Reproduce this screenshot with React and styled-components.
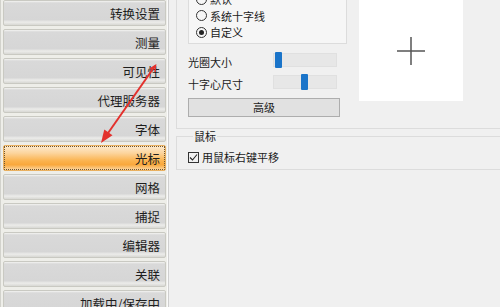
import React from 'react';
import styled, { createGlobalStyle } from 'styled-components';

const GlobalStyle = createGlobalStyle`
  html, body {
    margin: 0;
    padding: 0;
    background: #f0f0f0;
  }
  body {
    font-family: "Noto Sans CJK SC", "Noto Sans", sans-serif;
  }
`;

const Window = styled.div`
  position: relative;
  width: 500px;
  height: 307px;
  overflow: hidden;
  display: flex;
  background: #f0f0f0;
`;

const Sidebar = styled.div`
  width: 163px;
  flex: none;
  display: flex;
  flex-direction: column;
  gap: 3px;
  padding: 0 2px 0 2px;
  background: #eeeee9;
  border-left: 1px solid #d2d2cc;
  border-right: 1px solid #cfcfcf;
  box-shadow: inset -1px 0 0 #fafafa;
`;

const NavButton = styled.div`
  flex: none;
  height: 26px;
  box-sizing: border-box;
  display: flex;
  align-items: center;
  justify-content: flex-end;
  padding-right: 5px;
  font-size: 12.5px;
  color: #1e1e1e;
  border: 1px solid ${(p) => (p.$active ? '#e9b060' : '#c9c9c2')};
  border-radius: 2px;
  background: ${(p) =>
    p.$active
      ? 'linear-gradient(#fdebd0 0%, #fcd49c 30%, #fbb34e 62%, #f9a83c 78%, #fcd8a4 100%)'
      : 'linear-gradient(#f4f4f2 0%, #d9d9d9 8%, #d6d6d6 78%, #ececea 88%, #d8d8d4 100%)'};
  outline: ${(p) => (p.$active ? '1px dotted #6e5530' : 'none')};
  outline-offset: -2px;
  white-space: nowrap;
`;

const Panel = styled.div`
  flex: 1;
  min-width: 0;
  padding-left: 7px;
  margin-right: -4px;
  display: flex;
  flex-direction: column;
`;

const TopGroup = styled.div`
  margin-top: -12px;
  border-left: 1px solid #dcdcdc;
  border-bottom: 1px solid #dcdcdc;
  padding: 0 0 11px 11px;
  display: flex;
  gap: 12px;
  align-items: flex-start;
`;

const LeftCol = styled.div`
  width: 159px;
  display: flex;
  flex-direction: column;
`;

const RadioBox = styled.div`
  border: 1px solid #dcdcdc;
  background: #f6f6f6;
  padding: 2px 0 2px 7px;
`;

const RadioRow = styled.div`
  height: 16.5px;
  display: flex;
  align-items: center;
  gap: 3px;
  font-size: 11px;
  color: #1a1a1a;
`;

const RadioDot = styled.span`
  width: 11px;
  height: 11px;
  box-sizing: border-box;
  border: 1px solid #333;
  border-radius: 50%;
  display: flex;
  align-items: center;
  justify-content: center;
  &::after {
    content: '';
    width: 5px;
    height: 5px;
    border-radius: 50%;
    background: ${(p) => (p.$checked ? '#222' : 'transparent')};
  }
`;

const SliderGrid = styled.div`
  margin-top: 8px;
  display: grid;
  grid-template-columns: 85px 64px;
  row-gap: 5px;
  align-items: center;
`;

const SliderLabel = styled.div`
  height: 17px;
  box-sizing: border-box;
  font-size: 11px;
  line-height: 17px;
  color: #1a1a1a;
  padding-top: 2px;
`;

const Track = styled.div`
  position: relative;
  height: 14px;
  background: #e7e7e7;
  border: 1px solid #e0e0e0;
  box-sizing: border-box;
`;

const Thumb = styled.div`
  position: absolute;
  top: -2px;
  width: 7px;
  height: 16px;
  background: #1a74c9;
  border-radius: 1px;
`;

const AdvButton = styled.div`
  margin-top: 7px;
  width: 152px;
  height: 19px;
  box-sizing: border-box;
  border: 1px solid #adadad;
  background: #e1e1e1;
  display: flex;
  align-items: center;
  justify-content: center;
  font-size: 11px;
  color: #1a1a1a;
`;

const Preview = styled.div`
  margin-top: 12px;
  width: 104px;
  height: 101px;
  background: #ffffff;
  display: flex;
  align-items: center;
  justify-content: center;
`;

const Fieldset = styled.fieldset`
  margin: 1px 0 0 0;
  padding: 6px 0 3px 11px;
  border: 1px solid #dcdcdc;
  min-width: 0;
`;

const Legend = styled.legend`
  margin-left: 5px;
  padding: 0 1px;
  font-size: 11px;
  line-height: 13px;
  color: #1a1a1a;
`;

const CheckRow = styled.div`
  display: flex;
  align-items: center;
  gap: 3px;
  height: 17px;
  font-size: 11px;
  color: #1a1a1a;
`;

const CheckBox = styled.span`
  width: 11px;
  height: 11px;
  box-sizing: border-box;
  border: 1px solid #333;
  display: flex;
  align-items: center;
  justify-content: center;
`;

const Overlay = styled.svg`
  position: absolute;
  left: 0;
  top: 0;
  pointer-events: none;
`;

const navItems = ['转换设置', '测量', '可见性', '代理服务器', '字体', '光标', '网格', '捕捉', '编辑器', '关联', '加载中/保存中'];

function Slider({ pos }) {
  return (
    <Track>
      <Thumb style={{ left: pos }} />
    </Track>
  );
}

export default function App() {
  return (
    <>
      <GlobalStyle />
      <Window>
        <Sidebar>
          {navItems.map((item) => (
            <NavButton key={item} $active={item === '光标'}>
              {item}
            </NavButton>
          ))}
        </Sidebar>

        <Panel>
          <TopGroup>
            <LeftCol>
              <RadioBox>
                <RadioRow><RadioDot />默认</RadioRow>
                <RadioRow><RadioDot />系统十字线</RadioRow>
                <RadioRow><RadioDot $checked />自定义</RadioRow>
              </RadioBox>
              <SliderGrid>
                <SliderLabel>光圈大小</SliderLabel>
                <Slider pos={1} />
                <SliderLabel>十字心尺寸</SliderLabel>
                <Slider pos={27} />
              </SliderGrid>
              <AdvButton>高级</AdvButton>
            </LeftCol>
            <Preview>
              <svg width="28" height="28" viewBox="0 0 28 28">
                <path d="M0 14H28M14 0V28" stroke="#555" strokeWidth="1.5" />
              </svg>
            </Preview>
          </TopGroup>

          <Fieldset>
            <Legend>鼠标</Legend>
            <CheckRow>
              <CheckBox>
                <svg width="9" height="9" viewBox="0 0 9 9">
                  <path d="M1 4.5L3.5 7L8 1.5" fill="none" stroke="#222" strokeWidth="1.1" />
                </svg>
              </CheckBox>
              用鼠标右键平移
            </CheckRow>
          </Fieldset>
        </Panel>

        <Overlay width="500" height="307" viewBox="0 0 500 307">
          <line x1="155" y1="66" x2="106" y2="136" stroke="#e3312d" strokeWidth="2" />
          <polygon points="101,143 112.5,135.2 104.3,129.5" fill="#e3312d" />
          <path d="M150 69L155.5 65.5L155 72" fill="none" stroke="#e3312d" strokeWidth="1.5" />
        </Overlay>
      </Window>
    </>
  );
}
